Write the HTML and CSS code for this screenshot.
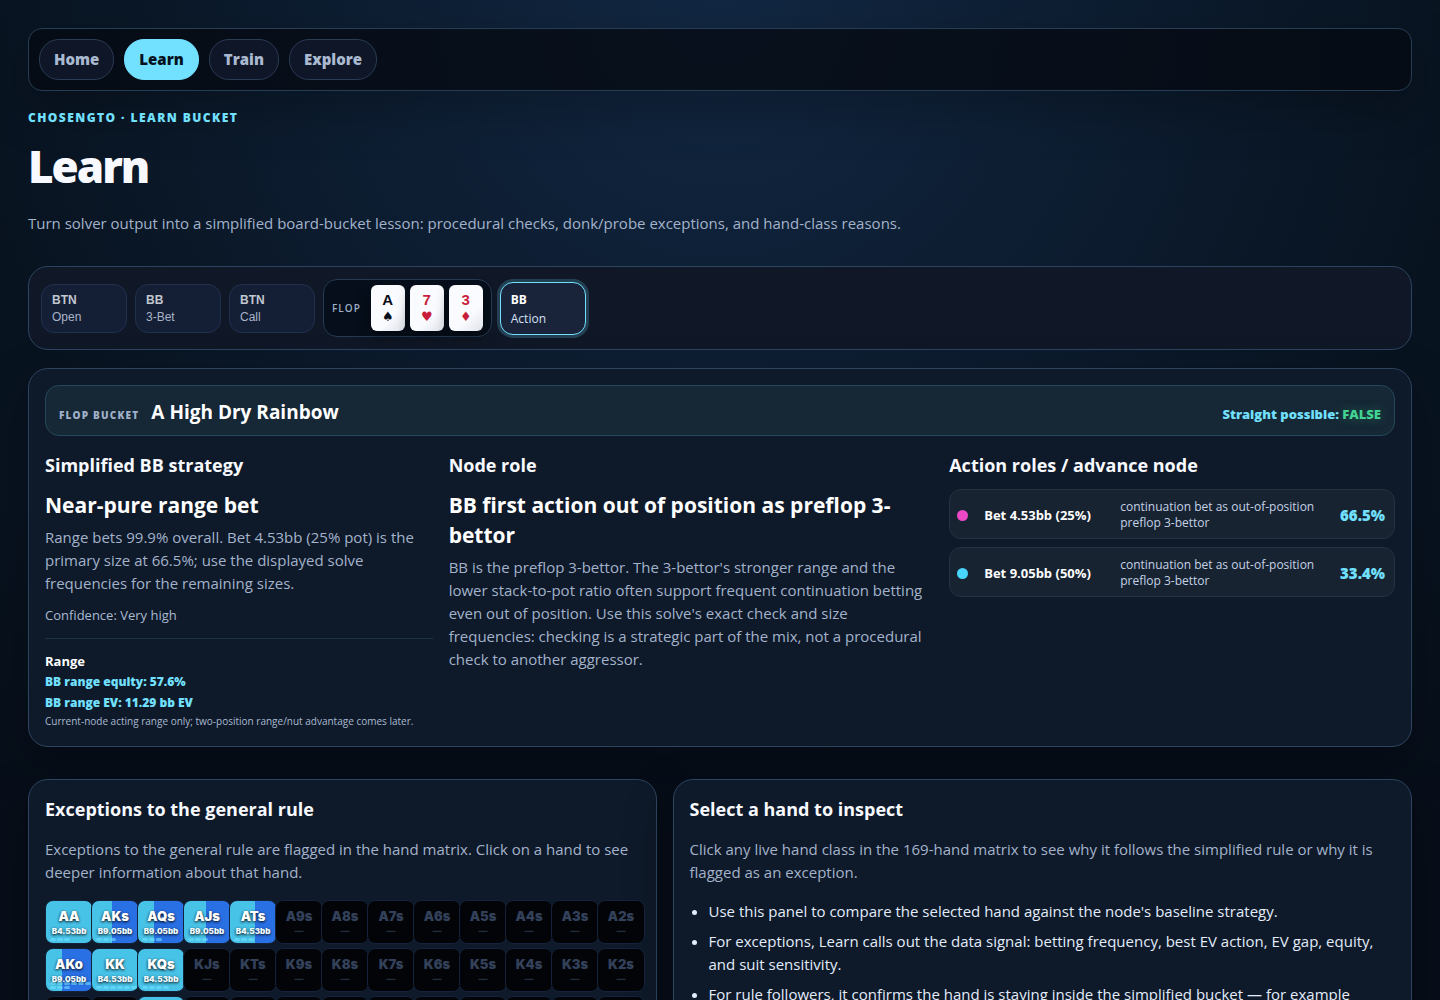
FILE: index.html
```html
<!DOCTYPE html>
<html lang="en">
  <head>
    <meta charset="UTF-8" />
    <meta name="viewport" content="width=device-width, initial-scale=1.0" />
    <title>Learn - ChosenGTO</title>
    <link rel="stylesheet" href="styles.css">
  </head>
  <body>
    <main class="page">
      <nav class="nav">
        <a href="#home" class="nav-link">Home</a>
        <a href="#learn" class="nav-link active">Learn</a>
        <a href="#train" class="nav-link">Train</a>
        <a href="#explore" class="nav-link">Explore</a>
      </nav>

      <header class="hero">
        <p class="eyebrow">ChosenGTO · Learn bucket</p>
        <h1>Learn</h1>
        <p class="lede">
          Turn solver output into a simplified board-bucket lesson: procedural
          checks, donk/probe exceptions, and hand-class reasons.
        </p>
      </header>

      <section class="timeline">
        <button class="seat"><strong>BTN</strong><span>Open</span></button>
        <button class="seat"><strong>BB</strong><span>3-Bet</span></button>
        <button class="seat"><strong>BTN</strong><span>Call</span></button>
        <div class="flop">
          <span class="flop-label">Flop</span>
          <div class="cards">
            <span class="card">A<i>♠</i></span>
            <span class="card red">7<i>♥</i></span>
            <span class="card red">3<i>♦</i></span>
          </div>
        </div>
        <div class="seat current"><strong>BB</strong><span>Action</span></div>
      </section>

      <section class="panel strategy">
        <div class="bucket">
          <div class="bucket-name">
            <span class="bucket-label">Flop bucket</span>
            <strong>A High Dry Rainbow</strong>
          </div>
          <p class="straight">Straight possible: <span>FALSE</span></p>
        </div>

        <div class="strategy-grid">
          <div>
            <h2>Simplified BB strategy</h2>
            <h3>Near-pure range bet</h3>
            <p class="copy">
              Range bets 99.9% overall. Bet 4.53bb (25% pot) is the primary size
              at 66.5%; use the displayed solve frequencies for the remaining
              sizes.
            </p>
            <p class="confidence">Confidence: Very high</p>
            <div class="range">
              <strong>Range</strong>
              <p class="stat">BB range equity: 57.6%</p>
              <p class="stat">BB range EV: 11.29 bb EV</p>
              <p class="note">
                Current-node acting range only; two-position range/nut advantage
                comes later.
              </p>
            </div>
          </div>

          <div>
            <h2>Node role</h2>
            <h3>BB first action out of position as preflop 3-bettor</h3>
            <p class="copy">
              BB is the preflop 3-bettor. The 3-bettor's stronger range and the
              lower stack-to-pot ratio often support frequent continuation
              betting even out of position. Use this solve's exact check and
              size frequencies: checking is a strategic part of the mix, not a
              procedural check to another aggressor.
            </p>
          </div>

          <div>
            <h2>Action roles / advance node</h2>
            <div class="actions">
              <button class="action">
                <span class="dot pink"></span>
                <strong>Bet 4.53bb (25%)</strong>
                <span class="role">continuation bet as out-of-position preflop 3-bettor</span>
                <span class="pct">66.5%</span>
              </button>
              <button class="action">
                <span class="dot cyan"></span>
                <strong>Bet 9.05bb (50%)</strong>
                <span class="role">continuation bet as out-of-position preflop 3-bettor</span>
                <span class="pct">33.4%</span>
              </button>
            </div>
          </div>
        </div>
      </section>

      <div class="lower">
        <section class="panel">
          <h2>Exceptions to the general rule</h2>
          <p class="copy intro">
            Exceptions to the general rule are flagged in the hand matrix. Click
            on a hand to see deeper information about that hand.
          </p>
          <div class="matrix" id="matrix"></div>
        </section>

        <section class="panel">
          <h2>Select a hand to inspect</h2>
          <p class="copy intro">
            Click any live hand class in the 169-hand matrix to see why it
            follows the simplified rule or why it is flagged as an exception.
          </p>
          <ul class="tips">
            <li>
              Use this panel to compare the selected hand against the node's
              baseline strategy.
            </li>
            <li>
              For exceptions, Learn calls out the data signal: betting
              frequency, best EV action, EV gap, equity, and suit sensitivity.
            </li>
            <li>
              For rule followers, it confirms the hand is staying inside the
              simplified bucket — for example
            </li>
          </ul>
        </section>
      </div>
    </main>
    <script src="matrix.js"></script>
  </body>
</html>
```
FILE: styles.css
```css
* {
  box-sizing: border-box;
}

body {
  margin: 0;
  min-height: 100vh;
  color: #e2ecfa;
  font-family: "Segoe UI", "Open Sans", "Noto Sans", sans-serif;
  font-size: 15px;
  line-height: 23px;
  background:
    radial-gradient(circle at 50% 0, rgba(30, 64, 110, 0.45), transparent 760px),
    linear-gradient(180deg, #08131f, #081320 45%, #070e19 75%);
}

h1,
h2,
h3,
p {
  margin: 0;
}

.page {
  padding: 28px;
}

/* Navigation */
.nav {
  display: flex;
  gap: 10px;
  padding: 10px;
  border: 1px solid #263d54;
  border-radius: 14px;
  background: rgba(5, 9, 17, 0.75);
  box-shadow: 0 18px 50px rgba(0, 0, 0, 0.25);
}

.nav-link {
  padding: 8px 14px;
  border: 1px solid #2a3b54;
  border-radius: 20px;
  background: #0e1627;
  color: #a9b9d0;
  font-weight: 800;
  text-decoration: none;
}

.nav-link.active {
  border-color: #72e0ff;
  background: #72e0ff;
  color: #04121d;
}

/* Page heading */
.hero {
  padding: 17px 0 31px;
}

.eyebrow {
  color: #72e0ff;
  font-size: 12px;
  font-weight: 800;
  letter-spacing: 0.12em;
  line-height: 20px;
  text-transform: uppercase;
}

h1 {
  margin: 14px 0 22px;
  color: #f7f9ff;
  font-size: 44px;
  font-weight: 800;
  letter-spacing: -2px;
  line-height: 48px;
}

.lede,
.copy {
  color: #a3b3cb;
}

/* Hand history */
.timeline {
  display: flex;
  align-items: center;
  gap: 8px;
  padding: 12px;
  border: 1px solid #2d4460;
  border-radius: 20px;
  background: #101827;
}

.seat {
  display: flex;
  flex-direction: column;
  width: 86px;
  padding: 7px 10px 6px;
  border: 1px solid #20304d;
  border-radius: 13px;
  background: #141f36;
  color: #a7b3c6;
  font-family: Arial, "Liberation Sans", sans-serif;
  font-size: 12px;
  line-height: 17px;
  text-align: left;
}

.seat strong {
  color: #c1c6cf;
}

.seat.current {
  border-color: #72e0ff;
  background: #19243b;
  box-shadow: 0 0 0 3px rgba(114, 224, 255, 0.2);
  color: #d5e0f2;
  font-family: "Segoe UI", "Open Sans", "Noto Sans", sans-serif;
  line-height: 19px;
}

.seat.current strong {
  color: #fff;
}

.flop {
  display: flex;
  align-items: center;
  gap: 10px;
  padding: 5px 8px;
  border: 1px solid #263a52;
  border-radius: 14px;
  background: #050e1a;
}

.flop-label {
  color: #9fb0c8;
  font-size: 10px;
  font-weight: 600;
  letter-spacing: 1px;
  text-transform: uppercase;
}

.cards {
  display: flex;
  gap: 5px;
}

.card {
  display: flex;
  flex-direction: column;
  align-items: center;
  justify-content: center;
  width: 34px;
  height: 46px;
  border-radius: 6px;
  background: linear-gradient(135deg, #fafbff 65%, #dfe2ea);
  box-shadow: 0 6px 14px rgba(0, 0, 0, 0.4);
  color: #0b0f18;
  font-family: Arial, "Liberation Sans", sans-serif;
  font-size: 15px;
  font-weight: 700;
  line-height: 17px;
}

.card i {
  font-family: "DejaVu Sans", sans-serif;
  font-size: 13px;
  font-style: normal;
  font-weight: 400;
}

.card.red {
  color: #c81e3c;
}

/* Panels */
.panel {
  min-width: 0;
  padding: 16px;
  border: 1px solid #2d4460;
  border-radius: 20px;
  background: #0e1929;
  box-shadow: 0 18px 50px rgba(0, 0, 0, 0.25);
}

.strategy {
  margin-top: 18px;
}

h2 {
  color: #f7f9ff;
  font-size: 18px;
  font-weight: 700;
  line-height: 26px;
}

h3 {
  margin: 12px 0 6px;
  color: #fff;
  font-size: 21px;
  font-weight: 700;
  line-height: 30px;
}

.bucket {
  display: flex;
  align-items: baseline;
  justify-content: space-between;
  padding: 12px 13px 8px;
  border: 1px solid #24495a;
  border-radius: 14px;
  background: #162735;
}

.bucket-name {
  display: flex;
  align-items: baseline;
  gap: 12px;
}

.bucket-name strong {
  color: #fff;
  font-size: 19px;
  line-height: 29px;
}

.bucket-label {
  color: #9fb0c8;
  font-size: 10px;
  font-weight: 800;
  letter-spacing: 0.12em;
  text-transform: uppercase;
}

.straight {
  color: #72e0ff;
  font-size: 13px;
  font-weight: 800;
}

.straight span {
  color: #42d392;
  text-shadow: 0 0 12px rgba(66, 211, 146, 0.4);
}

.strategy-grid {
  display: grid;
  grid-template-columns: 1fr 1.25fr 1.15fr;
  gap: 16px;
  margin-top: 16px;
}

.confidence {
  margin-top: 9px;
  color: #a9b9d0;
  font-size: 13px;
}

.range {
  margin-top: 11px;
  padding-top: 12px;
  border-top: 1px solid #1b3243;
  font-size: 13px;
  line-height: 20px;
}

.range strong {
  color: #fff;
}

.stat {
  color: #72e0ff;
  font-size: 12px;
  font-weight: 800;
  line-height: 21px;
}

.note {
  color: #a9b9d0;
  font-size: 10px;
  line-height: 17px;
}

/* Action rows */
.actions {
  display: grid;
  gap: 8px;
  margin-top: 11px;
}

.action {
  display: grid;
  grid-template-columns: 11px 120px 1fr auto;
  align-items: center;
  gap: 16px;
  padding: 9px 9px 7px 7px;
  border: 1px solid #243241;
  border-radius: 12px;
  background: #172331;
  color: #c5d2e6;
  font: inherit;
  font-size: 12px;
  line-height: 16px;
  text-align: left;
}

.action strong {
  color: #fff;
  font-size: 13px;
}

.dot {
  width: 11px;
  height: 11px;
  border-radius: 50%;
}

.dot.pink {
  background: #ec48c6;
}

.dot.cyan {
  background: #48d5fb;
}

.pct {
  color: #72e0ff;
  font-size: 15px;
  font-weight: 800;
}

/* Lower panels */
.lower {
  display: grid;
  grid-template-columns: 0.85fr 1fr;
  gap: 16px;
  margin-top: 32px;
}

.intro {
  margin-top: 16px;
}

.tips {
  margin: 16px 0 0;
  padding-left: 19px;
}

.tips li {
  margin-bottom: 7px;
}

/* Hand matrix */
.matrix {
  display: grid;
  grid-template-columns: repeat(13, minmax(46px, 1fr));
  gap: 4px 0;
  margin-top: 16px;
}

.hand {
  display: flex;
  flex-direction: column;
  align-items: center;
  position: relative;
  width: calc(100% + 2px);
  height: 44px;
  padding: 7px 0 0;
  border: 1px solid #14233b;
  border-radius: 8px;
  background: #020408;
  color: #33415a;
  font-family: "Arial Black", Inter, Arial, sans-serif;
  font-size: 13px;
  font-weight: 900;
  line-height: 17px;
}

.hand small {
  color: #222d3e;
  font-size: 9px;
  line-height: 12px;
}

.hand.live {
  background: linear-gradient(90deg, #48c3e8 var(--split), #2970e5 var(--split));
  color: #fff;
  text-shadow: 0 1px 3px #000;
}

.hand.live small {
  color: #eefaff;
  font-size: 8px;
}

/* Suit combo ticks along the bottom edge */
.ticks {
  position: absolute;
  right: 0;
  bottom: 2px;
  left: 4px;
  display: flex;
  flex-wrap: wrap;
  gap: 1px;
}

.ticks i {
  width: 6px;
  height: 3px;
  border-radius: 2px;
  background: rgba(114, 224, 255, 0.6);
}
```
FILE: matrix.js
```js
const RANKS = "AKQJT98765432".split("");

// label: [bet size, share of the small size, combo ticks]
const LIVE = {
  AA: ["B4.53bb", 100, 3],
  AKs: ["B9.05bb", 43, 3],
  AQs: ["B9.05bb", 34, 3],
  AJs: ["B9.05bb", 48, 3],
  ATs: ["B4.53bb", 54, 3],
  AKo: ["B9.05bb", 35, 9],
  KK: ["B4.53bb", 100, 6],
  KQs: ["B4.53bb", 100, 4],
  QQ: ["B4.53bb", 100, 6],
};

function handName(row, col) {
  if (row === col) return RANKS[row] + RANKS[row];
  return row < col
    ? RANKS[row] + RANKS[col] + "s"
    : RANKS[col] + RANKS[row] + "o";
}

const matrix = document.getElementById("matrix");

for (let row = 0; row < 3; row++) {
  for (let col = 0; col < RANKS.length; col++) {
    const name = handName(row, col);
    const live = LIVE[name];
    const cell = document.createElement("button");
    cell.className = live ? "hand live" : "hand";
    cell.innerHTML = `${name}<small>${live ? live[0] : "—"}</small>`;
    if (live) {
      cell.style.setProperty("--split", live[1] + "%");
      cell.innerHTML += `<span class="ticks">${"<i></i>".repeat(live[2])}</span>`;
    }
    matrix.appendChild(cell);
  }
}
```
